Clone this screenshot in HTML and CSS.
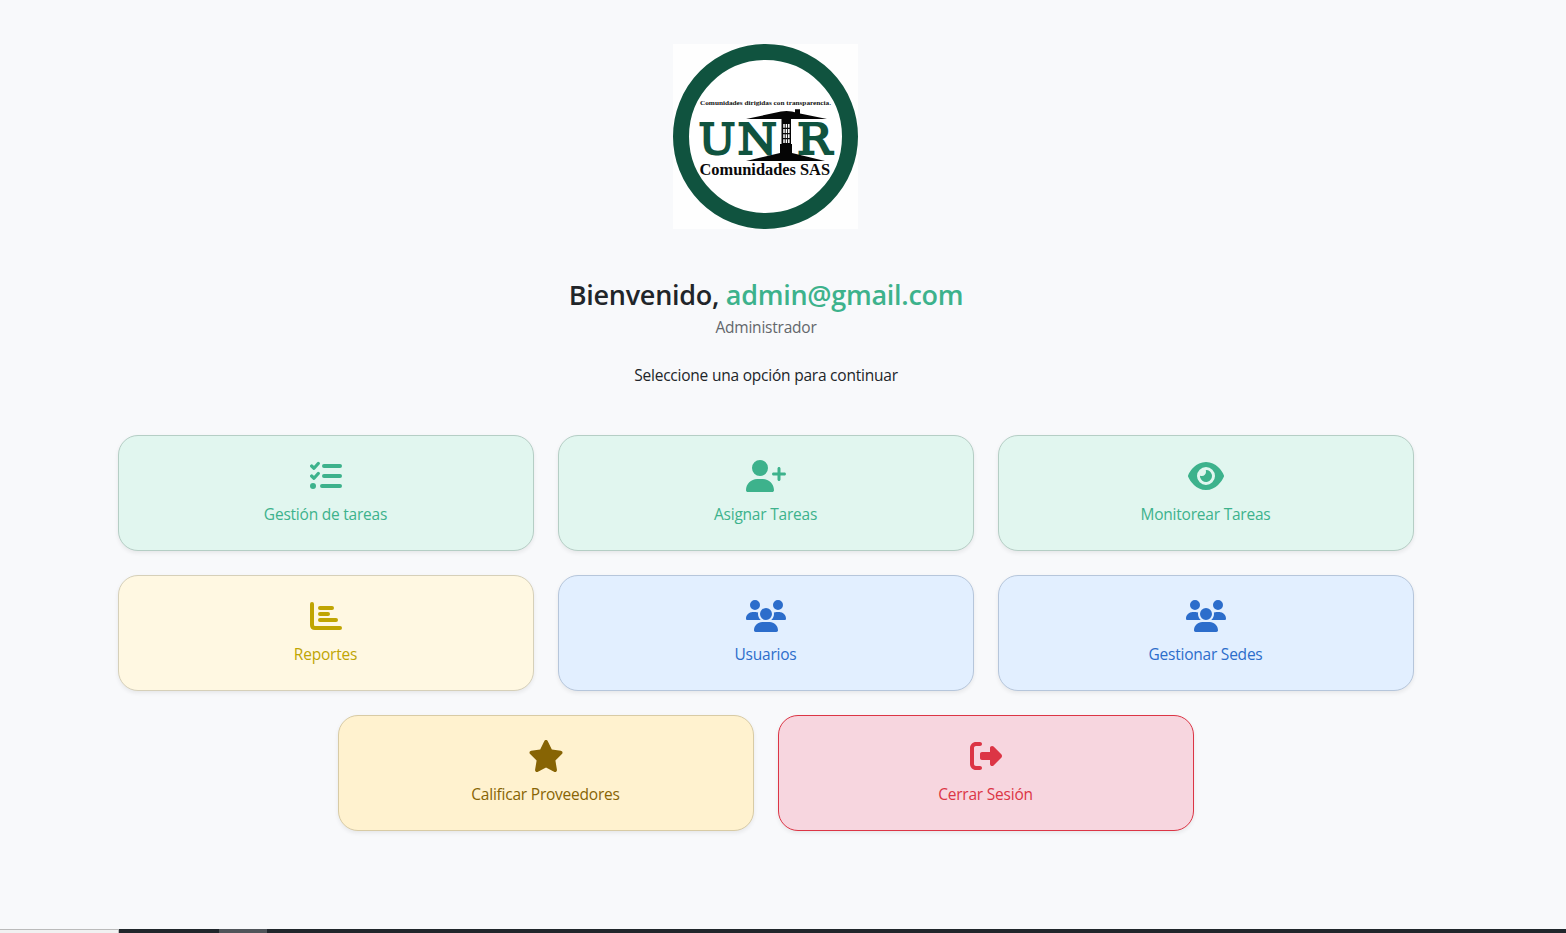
FILE: index.html
```html
<!DOCTYPE html>
<html lang="es">
<head>
<meta charset="utf-8">
<title>Panel de administración</title>
<link rel="stylesheet" href="styles.css">
</head>
<body>
<main class="page">
  <svg class="logo" viewBox="0 0 185 185" role="img" aria-label="UNIR Comunidades SAS">
    <rect width="185" height="185" fill="#fefefe"/>
    <circle cx="92.5" cy="92.5" r="84.5" fill="#fff" stroke="#10533f" stroke-width="16"/>
    <text class="logo-tag" x="27" y="61.3" textLength="131" lengthAdjust="spacingAndGlyphs">Comunidades dirigidas con transparencia.</text>
    <g class="logo-word">
      <text x="25.500" y="109.500" textLength="37" lengthAdjust="spacingAndGlyphs">U</text>
      <text x="64.500" y="109.500" textLength="39.500" lengthAdjust="spacingAndGlyphs">N</text>
      <text x="124" y="109.500" textLength="35" lengthAdjust="spacingAndGlyphs">R</text>
    </g>
    <path d="M73 75L108 67.6Q113.5 66.3 119 67.6L122 68.2V65.3H127V69.4L154 75H118V100H119V109L152 117H73L107 109V100H108.5V75Z" fill="#050505"/>
    <path d="M111 80V99.500M113.400 80V99.500M115.800 80V99.500" stroke="#fff" stroke-width="1.5" stroke-dasharray="3.8 1.3"/>
    <text class="logo-name" x="26.500" y="131" textLength="130.500" lengthAdjust="spacingAndGlyphs">Comunidades SAS</text>
  </svg>

  <h1 class="welcome">Bienvenido, <span class="welcome-user">admin@gmail.com</span></h1>
  <p class="role">Administrador</p>
  <p class="hint">Seleccione una opción para continuar</p>

  <nav class="options">
    <a class="card green">
      <svg class="icon" viewBox="0 0 512 512"><path class="line" stroke-width="52" d="M26 96L64 132L132 56M26 256L64 292L132 216"/><path class="line" stroke-width="64" d="M224 96H480M224 256H480M192 416H480"/><circle cx="48" cy="416" r="48"/></svg>
      <span>Gestión de tareas</span>
    </a>
    <a class="card green">
      <svg class="icon wide" viewBox="0 0 640 512"><path d="M96 128a128 128 0 1 1 256 0A128 128 0 1 1 96 128zM0 482.3C0 383.8 79.8 304 178.3 304h91.4C368.2 304 448 383.8 448 482.3c0 16.4-13.3 29.7-29.7 29.7H29.7C13.3 512 0 498.7 0 482.3zM504 312V248H440c-13.3 0-24-10.7-24-24s10.7-24 24-24h64V136c0-13.3 10.7-24 24-24s24 10.7 24 24v64h64c13.3 0 24 10.7 24 24s-10.7 24-24 24H552v64c0 13.3-10.7 24-24 24s-24-10.7-24-24z"/></svg>
      <span>Asignar Tareas</span>
    </a>
    <a class="card green">
      <svg class="icon medium" viewBox="0 0 576 512"><path d="M288 32c-80.8 0-145.5 36.8-192.6 80.6C48.6 156 17.3 208 2.5 243.7c-3.3 7.9-3.3 16.7 0 24.6C17.3 304 48.6 356 95.4 399.4C142.5 443.2 207.2 480 288 480s145.500-36.8 192.600-80.6c46.8-43.5 78.1-95.4 93-131.1c3.3-7.9 3.3-16.7 0-24.6c-14.9-35.7-46.2-87.7-93-131.1C433.5 68.8 368.8 32 288 32zM144 256a144 144 0 1 1 288 0 144 144 0 1 1 -288 0zm144-64c0 35.3-28.7 64-64 64c-7.1 0-13.9-1.2-20.3-3.3c-5.5-1.8-11.9 1.6-11.7 7.4c.3 6.9 1.3 13.8 3.2 20.7c13.7 51.2 66.4 81.6 117.6 67.9s81.6-66.4 67.9-117.6c-11.1-41.5-47.8-69.4-88.6-71.1c-5.8-.2-9.2 6.1-7.4 11.7c2.1 6.4 3.3 13.2 3.3 20.3z" fill-rule="evenodd"/></svg>
      <span>Monitorear Tareas</span>
    </a>
    <a class="card yellow">
      <svg class="icon" viewBox="0 0 512 512"><path class="line" stroke-width="64" d="M32 64V400Q32 448 80 448H480M160 128H352M160 224H288M160 320H416"/></svg>
      <span>Reportes</span>
    </a>
    <a class="card blue">
      <svg class="icon wide" viewBox="0 0 640 512"><path d="M144 0a80 80 0 1 1 0 160A80 80 0 1 1 144 0zM512 0a80 80 0 1 1 0 160A80 80 0 1 1 512 0zM0 298.7C0 239.8 47.8 192 106.7 192h42.7c15.9 0 31 3.5 44.6 9.7c-1.3 7.2-1.9 14.7-1.9 22.3c0 38.2 16.8 72.5 43.3 96c-.2 0-.4 0-.7 0H21.3C9.6 320 0 310.4 0 298.7zM405.3 320c-.2 0-.4 0-.7 0c26.6-23.5 43.3-57.8 43.3-96c0-7.6-.7-15-1.9-22.3c13.6-6.3 28.7-9.7 44.6-9.7h42.7C592.2 192 640 239.8 640 298.7c0 11.8-9.6 21.3-21.3 21.3H405.3zM224 224a96 96 0 1 1 192 0 96 96 0 1 1 -192 0zM128 485.3C128 411.7 187.7 352 261.3 352H378.7C452.3 352 512 411.7 512 485.3c0 14.7-11.9 26.7-26.7 26.7H154.7c-14.7 0-26.7-11.9-26.7-26.7z"/></svg>
      <span>Usuarios</span>
    </a>
    <a class="card blue">
      <svg class="icon wide" viewBox="0 0 640 512"><path d="M144 0a80 80 0 1 1 0 160A80 80 0 1 1 144 0zM512 0a80 80 0 1 1 0 160A80 80 0 1 1 512 0zM0 298.7C0 239.8 47.8 192 106.7 192h42.7c15.9 0 31 3.5 44.6 9.7c-1.3 7.2-1.9 14.7-1.9 22.3c0 38.2 16.8 72.5 43.3 96c-.2 0-.4 0-.7 0H21.3C9.6 320 0 310.4 0 298.7zM405.3 320c-.2 0-.4 0-.7 0c26.6-23.5 43.3-57.8 43.3-96c0-7.6-.7-15-1.9-22.3c13.6-6.3 28.7-9.7 44.6-9.7h42.7C592.2 192 640 239.8 640 298.7c0 11.8-9.6 21.3-21.3 21.3H405.3zM224 224a96 96 0 1 1 192 0 96 96 0 1 1 -192 0zM128 485.3C128 411.7 187.7 352 261.3 352H378.7C452.3 352 512 411.7 512 485.3c0 14.7-11.9 26.7-26.7 26.7H154.7c-14.7 0-26.7-11.9-26.7-26.7z"/></svg>
      <span>Gestionar Sedes</span>
    </a>
    <a class="card amber">
      <svg class="icon medium" viewBox="0 0 576 512"><path d="M316.9 18C311.6 7 300.4 0 288.1 0s-23.4 7-28.8 18L195 150.3 51.4 171.5c-12 1.8-22 10.2-25.7 21.7s-.7 24.2 7.9 32.7L137.8 329 113.2 474.7c-2 12 3 24.2 12.9 31.3s23 8 33.8 2.3l128.3-68.5 128.3 68.5c10.8 5.7 23.9 4.9 33.8-2.3s14.9-19.3 12.9-31.3L438.5 329 542.7 225.9c8.6-8.5 11.7-21.2 7.9-32.7s-13.7-19.9-25.7-21.7L381.2 150.3 316.9 18z"/></svg>
      <span>Calificar Proveedores</span>
    </a>
    <a class="card red">
      <svg class="icon" viewBox="0 0 512 512"><path d="M377.9 105.9L500.7 228.7c7.2 7.2 11.3 17.1 11.3 27.3s-4.1 20.1-11.3 27.3L377.9 406.1c-6.4 6.4-15 9.9-24 9.9c-18.7 0-33.9-15.2-33.9-33.9l0-62.1-128 0c-17.7 0-32-14.3-32-32l0-64c0-17.7 14.3-32 32-32l128 0 0-62.1c0-18.7 15.2-33.9 33.9-33.9c9 0 17.6 3.6 24 9.9zM160 96L96 96c-17.7 0-32 14.3-32 32l0 256c0 17.7 14.3 32 32 32l64 0c17.7 0 32 14.3 32 32s-14.3 32-32 32l-64 0c-53 0-96-43-96-96L0 128C0 75 43 32 96 32l64 0c17.7 0 32 14.3 32 32s-14.3 32-32 32z"/></svg>
      <span>Cerrar Sesión</span>
    </a>
  </nav>
</main>
<footer class="taskbar">
  <div class="taskbar-search"></div>
  <div class="taskbar-active"></div>
</footer>
</body>
</html>
```
FILE: styles.css
```css
* { box-sizing: border-box; }

body {
  margin: 0;
  height: 933px;
  display: flex;
  flex-direction: column;
  overflow: hidden;
  background: #f8f9fb;
  color: #212529;
  font: 15.5px/24px "Open Sans", "Noto Sans", sans-serif;
  letter-spacing: -0.22px;
}

.page {
  flex: 1;
  min-height: 0;
  display: flex;
  flex-direction: column;
  align-items: center;
  width: 1532px;
  padding-top: 44px;
}

.logo { display: block; width: 185px; height: 185px; margin-right: 1px; flex: none; letter-spacing: 0; }
.logo-tag { font: bold 7px "Liberation Serif", serif; fill: #111; }
.logo-word { font: 43px "DejaVu Serif", serif; fill: #10533f; stroke: #10533f; stroke-width: 2; }
.logo-name { font: bold 17px "Liberation Serif", serif; fill: #0a0a0a; }

.welcome {
  margin: 49px 0 0;
  font-size: 27px;
  font-weight: 600;
  line-height: 34px;
  letter-spacing: -0.28px;
  white-space: nowrap;
}
.welcome-user { color: #3db28c; }

.role { margin: 3px 0 0; color: #63676b; }
.hint { margin: 24px 0 0; }

.options {
  width: 1296px;
  margin-top: 48px;
  display: flex;
  flex-wrap: wrap;
  justify-content: center;
  gap: 24px;
}

.card {
  width: 416px;
  height: 116px;
  padding: 24px 1px 0 0;
  display: flex;
  flex-direction: column;
  align-items: center;
  gap: 10px;
  border: 1px solid;
  border-radius: 20px;
  box-shadow: 0 2px 4px rgba(0, 0, 0, .075);
}

.green { background: #e1f6ef; border-color: #b5cec5; color: #3db28c; }
.yellow { background: #fff8e2; border-color: #d6d0b9; color: #c0a502; }
.blue { background: #e2efff; border-color: #b6c6db; color: #2c6dcb; }
.amber { background: #fff2cf; border-color: #d8cba5; color: #876404; }
.red { background: #f7d6df; border-color: #dc3545; color: #dc3545; }

.icon { display: block; width: 32px; height: 32px; fill: currentColor; }
.icon.medium { width: 36px; }
.icon.wide { width: 40px; }
.line { fill: none; stroke: currentColor; stroke-linecap: round; stroke-linejoin: round; }

.taskbar { display: flex; height: 4px; flex: none; background: #20262b; }
.taskbar-search {
  width: 119px;
  background: #f1f1f1;
  border-top: 1px solid #bbb;
  border-right: 1px solid #bbb;
}
.taskbar-active { width: 48px; margin-left: 100px; background: #50555a; }
```
